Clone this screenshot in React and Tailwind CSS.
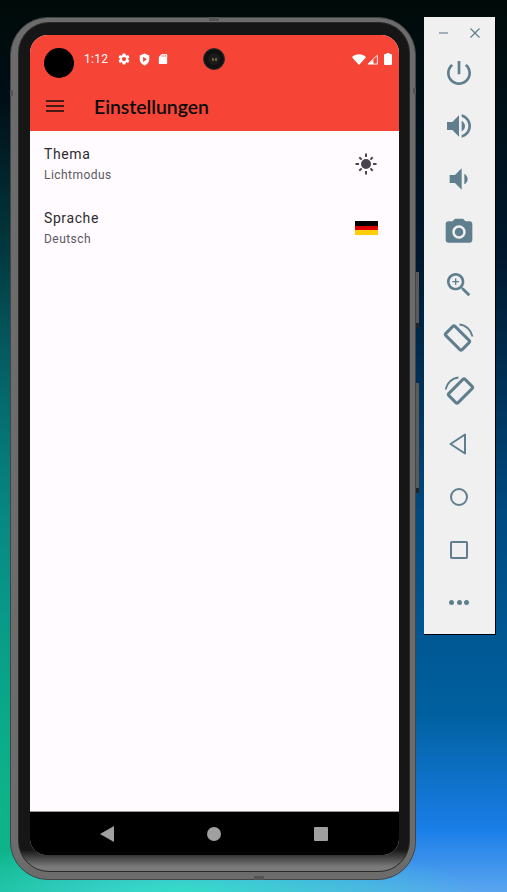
import React from "react";

const panelIcons = [
  { name: "power", d: "M13 3h-2v10h2V3zm4.83 2.17l-1.42 1.42C17.99 7.86 19 9.81 19 12c0 3.87-3.13 7-7 7s-7-3.13-7-7c0-2.19 1.01-4.14 2.58-5.42L6.17 5.17C4.23 6.82 3 9.26 3 12c0 4.97 4.03 9 9 9s9-4.03 9-9c0-2.74-1.23-5.18-3.17-6.83z" },
  { name: "up", d: "M3 9v6h4l5 5V4L7 9H3zm13.5 3c0-1.77-1.02-3.29-2.5-4.03v8.05c1.48-.73 2.5-2.25 2.5-4.02zM14 3.23v2.06c2.89.86 5 3.54 5 6.71s-2.11 5.85-5 6.71v2.06c4.01-.91 7-4.49 7-8.77s-2.99-7.86-7-8.77z" },
  { name: "down", d: "M18.5 12c0-1.77-1.02-3.29-2.5-4.03v8.05c1.48-.73 2.5-2.25 2.5-4.02zM5 9v6h4l5 5V4L9 9H5z" },
  { name: "camera", d: "M9 2L7.17 4H4c-1.1 0-2 .9-2 2v12c0 1.1.9 2 2 2h16c1.1 0 2-.9 2-2V6c0-1.1-.9-2-2-2h-3.17L15 2H9zm3 15c-2.76 0-5-2.24-5-5s2.24-5 5-5 5 2.24 5 5-2.24 5-5 5zM12 8.8a3.2 3.2 0 1 0 0 6.4 3.2 3.2 0 0 0 0-6.4z" },
  { name: "zoom", d: "M15.5 14h-.79l-.28-.27C15.41 12.59 16 11.11 16 9.5 16 5.91 13.09 3 9.5 3S3 5.91 3 9.5 5.91 16 9.5 16c1.61 0 3.09-.59 4.23-1.57l.27.28v.79l5 4.99L20.49 19l-4.99-5zm-6 0C7.01 14 5 11.99 5 9.5S7.01 5 9.5 5 14 7.01 14 9.5 11.99 14 9.5 14zM12 10h-2v2H9v-2H7V9h2V7h1v2h2v1z" },
];

function PanelIcon({ d }) {
  return (
    <div className="h-[53px] flex items-center justify-center">
      <svg viewBox="0 0 24 24" className="w-8 h-8 fill-[#5f7f8f]"><path d={d} /></svg>
    </div>
  );
}

function RotateIcon({ mirror }) {
  return (
    <div className="h-[53px] flex items-center justify-center">
      <svg viewBox="0 0 32 32" className={mirror ? "w-8 h-8 -scale-x-100" : "w-8 h-8"}>
        <rect x="3" y="9.500" width="23" height="13" rx="1.600" transform="rotate(45 14.500 16)" fill="none" stroke="#5f7f8f" strokeWidth="3" />
        <path d="M16.500 2.500C23 3 28 8 29.500 14.500" fill="none" stroke="#5f7f8f" strokeWidth="1.800" />
      </svg>
    </div>
  );
}

function NavOutline({ children }) {
  return (
    <div className="h-[53px] flex items-center justify-center">
      <svg viewBox="0 0 32 32" className="w-8 h-8 fill-none stroke-[#5f7f8f] stroke-[2px]">{children}</svg>
    </div>
  );
}

function Setting({ title, sub, children }) {
  return (
    <div className="h-16 pl-[14px] pr-[21px] flex items-center justify-between">
      <div className="flex flex-col pt-[1px]">
        <span className="text-[14px] leading-[20px] tracking-[0.6px] text-[#2c2b2f]">{title}</span>
        <span className="text-[12px] leading-[18px] mt-[2px] tracking-[0.45px] text-[#5c5862]">{sub}</span>
      </div>
      {children}
    </div>
  );
}

export default function App() {
  return (
    <div className="w-[507px] h-[892px] overflow-hidden flex items-start pl-[10px] pt-[17px] font-['Roboto',sans-serif] bg-[radial-gradient(ellipse_300px_50px_at_35%_100%,#35dcc8_0%,#35dcc800_100%),radial-gradient(ellipse_230px_720px_at_0%_92%,#0cb585_0%,#0a8a6800_100%),linear-gradient(to_bottom,#000a08_0%,#00172c_28%,#004a80_58%,#00609f_80%,#1a7ee8_93%,#5aa5f0_100%)]">
      {/* phone */}
      <div className="relative shrink-0 w-[406px] h-[863px] rounded-[38px] bg-[#6c6c6c] border border-[#444] pl-[7px] pr-[5px] pt-[4px] pb-[7px]">
        <div className="absolute top-[-1px] left-[198px] w-[10px] h-[4px] bg-[#555]" />
        <div className="absolute bottom-[-1px] left-[243px] w-[10px] h-[4px] bg-[#555]" />
        <div className="absolute left-[-1px] top-[72px] w-[3px] h-[6px] bg-[#555]" />
        <div className="absolute right-[-1px] top-[70px] w-[3px] h-[6px] bg-[#555]" />
        <div className="absolute right-[-4px] top-[254px] w-[3px] h-[56px] bg-[#5a5a5a] border-b-[5px] border-[#222]" />
        <div className="absolute right-[-4px] top-[365px] w-[3px] h-[110px] bg-[#5a5a5a] border-b-[5px] border-[#222]" />

        {/* bezel */}
        <div className="h-full rounded-[31px] border border-[#2a2a2a] pl-[11px] pr-[10px] pt-[12px] pb-[16px] flex bg-[linear-gradient(to_bottom,#161616_0%,#161616_97.5%,#7a7a7a_99.5%)]">
          {/* screen */}
          <div className="relative flex-1 flex flex-col overflow-hidden rounded-[18px] rounded-b-[16px] bg-[#fffbfe]">
            <div className="bg-[#f64537] h-[96px] shrink-0 flex flex-col">
              {/* status bar */}
              <div className="h-[56px] pl-[54px] pr-[7px] pt-[13px] flex items-start justify-between">
                <div className="flex items-center gap-[8px] h-[22px]">
                  <span className="text-white text-[12px] leading-[22px] tracking-[0.3px] w-[24px] mr-[1px]">1:12</span>
                  <svg viewBox="0 0 24 24" className="w-[14px] h-[14px] fill-white"><path d="M19.14 12.94c.04-.3.06-.61.06-.94 0-.32-.02-.64-.07-.94l2.03-1.58c.18-.14.23-.41.12-.61l-1.92-3.32c-.12-.22-.37-.29-.59-.22l-2.39.96c-.5-.38-1.03-.7-1.62-.94l-.36-2.54c-.04-.24-.24-.41-.48-.41h-3.84c-.24 0-.43.17-.47.41l-.36 2.54c-.59.24-1.13.57-1.62.94l-2.39-.96c-.22-.08-.47 0-.59.22L2.74 8.87c-.12.21-.08.47.12.61l2.03 1.58c-.05.3-.09.63-.09.94s.02.64.07.94l-2.03 1.58c-.18.14-.23.41-.12.61l1.92 3.32c.12.22.37.29.59.22l2.39-.96c.5.38 1.03.7 1.62.94l.36 2.54c.05.24.24.41.48.41h3.84c.24 0 .44-.17.47-.41l.36-2.54c.59-.24 1.13-.56 1.62-.94l2.39.96c.22.08.47 0 .59-.22l1.92-3.32c.12-.22.07-.47-.12-.61l-2.01-1.58zM12 15.600c-1.98 0-3.6-1.62-3.6-3.6s1.62-3.6 3.6-3.6 3.6 1.62 3.6 3.6-1.62 3.6-3.6 3.6z" /></svg>
                  <svg viewBox="0 0 12 14" className="w-[11px] h-[13px]"><path d="M6 .5l5.200 2v4.200c0 3.200-2.200 5.800-5.200 6.800C3 12.500.8 9.900.8 6.700V2.500z" fill="#fff" /><path d="M4.500 4l4 2.800-4 2.800z" fill="#f64537" /></svg>
                  <svg viewBox="0 0 12 14" className="w-[10px] h-[12px]"><path d="M4.500 1H10a1 1 0 0 1 1 1v10a1 1 0 0 1-1 1H2a1 1 0 0 1-1-1V4.500z" fill="#fff" /><path d="M5 2v2.500M7 2v2.500M9 2v2.500" stroke="#f64537" strokeWidth=".7" /></svg>
                </div>
                <div className="flex items-center gap-[1px] h-[22px]">
                  <svg viewBox="0 0 14 11" className="w-[14px] h-[11px]"><path d="M0 3.200C3.800-.6 10.200-.6 14 3.200L7 11z" fill="#fff" /></svg>
                  <svg viewBox="0 0 12 11" className="w-[11px] h-[11px]"><path d="M11.300 .8v9.700H1z" fill="none" stroke="#fff" strokeWidth="1" /><path d="M7 5.500v5H1.500z" fill="#fff" /></svg>
                  <svg viewBox="0 0 8 12" className="w-[8px] h-[12px] ml-[5px]"><path d="M2.500 0h3v1H7a1 1 0 0 1 1 1v9a1 1 0 0 1-1 1H1a1 1 0 0 1-1-1V2a1 1 0 0 1 1-1h1.500z" fill="#fff" /></svg>
                </div>
              </div>
              {/* app bar */}
              <div className="h-[40px] flex items-start pl-[16px]">
                <svg viewBox="0 0 18 12" className="w-[18px] h-[12px] mt-[9px] shrink-0"><path d="M0 1h18M0 6h18M0 11h18" stroke="#0c0c0c" strokeWidth="1.700" /></svg>
                <span className="ml-[30px] mt-[2px] text-[19.400px] leading-[28px] font-semibold text-[#0c0c0c] font-['Lato',sans-serif]">Einstellungen</span>
              </div>
            </div>

            <div className="flex-1">
              <Setting title="Thema" sub="Lichtmodus">
                <svg viewBox="0 0 24 24" className="w-[24px] h-[24px] mt-[1px] fill-[#49454f]"><path d="M12 7a5 5 0 1 0 0 10 5 5 0 0 0 0-10zM11 1.500h2v3.500h-2zM11 19h2v3.500h-2zM1.500 11H5v2H1.500zM19 11h3.500v2H19zM4.600 6l1.400-1.400 2.300 2.300-1.400 1.400zM15.700 17.100l1.400-1.400 2.300 2.300-1.400 1.400zM6 19.400L4.600 18l2.300-2.300 1.400 1.400zM17.100 8.300l-1.400-1.400L18 4.600 19.400 6z" /></svg>
              </Setting>
              <Setting title="Sprache" sub="Deutsch">
                <div className="w-[23px] h-[14px] flex flex-col mt-[2px]">
                  <div className="flex-1 bg-black" />
                  <div className="flex-1 bg-[#dd0000]" />
                  <div className="flex-1 bg-[#ffce00]" />
                </div>
              </Setting>
            </div>

            {/* navigation */}
            <div className="h-[44px] shrink-0 bg-black border-t border-[#999] flex items-center justify-between pl-[70px] pr-[71px]">
              <svg viewBox="0 0 14 16" className="w-[14px] h-[16px] fill-[#a0a0a0]"><path d="M14 0v16L0 8z" /></svg>
              <div className="w-[14px] h-[14px] rounded-full bg-[#a0a0a0]" />
              <div className="w-[14px] h-[14px] rounded-[1px] bg-[#a0a0a0]" />
            </div>

            <div className="absolute left-[14px] top-[13px] w-[30px] h-[30px] rounded-full bg-black" />
            <div className="absolute left-[173px] top-[13px] w-[22px] h-[22px] rounded-full bg-[#111] border border-[#2e2e2e] flex items-center justify-center">
              <div className="w-[12px] h-[12px] rounded-full bg-[#1c1c1c] flex items-center justify-center gap-[1px]">
                <div className="w-[2px] h-[3px] rounded-full bg-[#7a6c3c]" />
                <div className="w-[2px] h-[3px] rounded-full bg-[#7a6c3c]" />
              </div>
            </div>
          </div>
        </div>
      </div>

      {/* emulator toolbar */}
      <div className="ml-[8px] shrink-0 w-[72px] h-[618px] bg-[#f0f0f0] border border-black border-t-0 border-l-0 flex flex-col pr-[1px]">
        <div className="h-[29px] pt-[11px] pl-[15px] flex items-start gap-[16px]">
          <svg viewBox="0 0 10 10" className="w-[10px] h-[10px]"><path d="M0 5h9" stroke="#5f7f8f" strokeWidth="1.100" /></svg>
          <svg viewBox="0 0 10 10" className="w-[10px] h-[10px] ml-[5px]"><path d="M.5.5l9 9M9.500.5l-9 9" stroke="#5f7f8f" strokeWidth="1.200" /></svg>
        </div>
        {panelIcons.map((i) => <PanelIcon key={i.name} d={i.d} />)}
        <RotateIcon />
        <RotateIcon mirror />
        <NavOutline><path d="M22 6.500v19L7.500 16z" strokeLinejoin="round" /></NavOutline>
        <NavOutline><circle cx="16" cy="16" r="8" /></NavOutline>
        <NavOutline><rect x="8" y="8" width="16" height="16" rx=".8" /></NavOutline>
        <div className="h-[53px] flex items-center justify-center gap-[2.500px]">
          <div className="w-[5px] h-[5px] rounded-full bg-[#5f7f8f]" />
          <div className="w-[5px] h-[5px] rounded-full bg-[#5f7f8f]" />
          <div className="w-[5px] h-[5px] rounded-full bg-[#5f7f8f]" />
        </div>
      </div>
    </div>
  );
}
